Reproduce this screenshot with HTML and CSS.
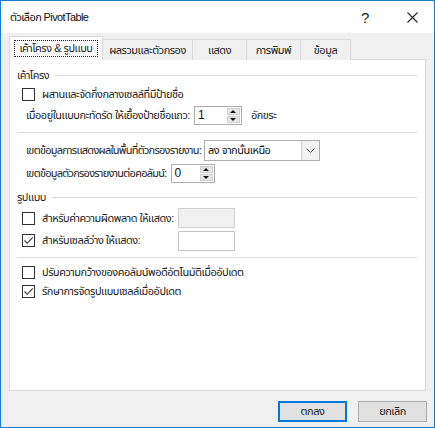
FILE: index.html
```html
<!DOCTYPE html>
<html lang="th">
<head>
<meta charset="utf-8">
<title>ตัวเลือก PivotTable</title>
<link rel="stylesheet" href="styles.css">
</head>
<body>
<div class="dialog">
  <div class="titlebar">
    <span class="title">ตัวเลือก PivotTable</span>
    <span class="help">?</span>
    <span class="close"><svg width="11" height="11" viewBox="0 0 11 11"><path d="M0.5 0.5 L10.5 10.5 M10.5 0.5 L0.5 10.5" stroke="#222" stroke-width="1.1" fill="none"/></svg></span>
  </div>
  <div class="tabs">
    <div class="tab tab-active w1"><span class="focus">เค้าโครง &amp; รูปแบบ</span></div>
    <div class="tab w2">ผลรวมและตัวกรอง</div>
    <div class="tab w3">แสดง</div>
    <div class="tab w4">การพิมพ์</div>
    <div class="tab w5">ข้อมูล</div>
  </div>
  <div class="panel">
    <div class="group-head h1"><span>เค้าโครง</span><i class="rule"></i></div>
    <div class="row cb1"><span class="cb"></span><span>ผสานและจัดกึ่งกลางเซลล์ที่มีป้ายชื่อ</span></div>
    <div class="row sub r-indent"><span>เมื่ออยู่ในแบบกะทัดรัด ให้เยื้องป้ายชื่อแถว:</span>
      <span class="spin s1"><span class="val">1</span><span class="arrows"><b class="up"></b><b class="down"></b></span></span>
      <span class="unit">อักขระ</span></div>
    <div class="sep s-a"></div>
    <div class="row sub r-select"><span class="tight">เขตข้อมูลการแสดงผลในพื้นที่ตัวกรองรายงาน:</span>
      <span class="select"><span class="val">ลง จากนั้นเหนือ</span><span class="drop"><svg width="9" height="5" viewBox="0 0 9 5"><path d="M0.5 0.5 L4.5 4.5 L8.5 0.5" stroke="#555" fill="none"/></svg></span></span></div>
    <div class="row sub r-spin2"><span class="tight">เขตข้อมูลตัวกรองรายงานต่อคอลัมน์:</span>
      <span class="spin s2"><span class="val">0</span><span class="arrows"><b class="up"></b><b class="down"></b></span></span></div>
    <div class="group-head h2"><span>รูปแบบ</span><i class="rule"></i></div>
    <div class="row r-err"><span class="cb"></span><span class="lbl">สำหรับค่าความผิดพลาด ให้แสดง:</span><span class="field disabled"></span></div>
    <div class="row r-blank"><span class="cb checked"><svg width="11" height="11" viewBox="0 0 11 11"><path d="M1.5 5.5 L4.2 8.3 L9.8 2.3" stroke="#333" stroke-width="1.1" fill="none"/></svg></span><span class="lbl">สำหรับเซลล์ว่าง ให้แสดง:</span><span class="field"></span></div>
    <div class="sep s-b"></div>
    <div class="row r-auto"><span class="cb"></span><span>ปรับความกว้างของคอลัมน์พอดีอัตโนมัติเมื่ออัปเดต</span></div>
    <div class="row r-keep"><span class="cb checked"><svg width="11" height="11" viewBox="0 0 11 11"><path d="M1.5 5.5 L4.2 8.3 L9.8 2.3" stroke="#333" stroke-width="1.1" fill="none"/></svg></span><span>รักษาการจัดรูปแบบเซลล์เมื่ออัปเดต</span></div>
  </div>
  <div class="footer">
    <button class="btn btn-default">ตกลง</button>
    <button class="btn">ยกเลิก</button>
  </div>
</div>
</body>
</html>
```
FILE: styles.css
```css
* { box-sizing: border-box; }
html, body { margin: 0; padding: 0; background: #f0f0f0; }
body {
  font-family: "Liberation Sans", "Noto Sans Thai", "Noto Sans Thai UI", "Leelawadee UI", Tahoma, "Loma", "Garuda", sans-serif;
  font-size: 11px;
  letter-spacing: -0.5px;
  color: #1a1a1a;
  white-space: nowrap;
}
.dialog {
  width: 435px;
  height: 428px;
  border: 1px solid #1979ca;
  background: #f0f0f0;
  display: flex;
  flex-direction: column;
}
.titlebar {
  height: 32px;
  background: #fff;
  display: flex;
  align-items: center;
  padding-left: 9px;
  flex: none;
}
.title { font-size: 11px; letter-spacing: -0.6px; color: #111; flex: 1; }
.help { font-size: 15px; letter-spacing: 0; color: #222; width: 14px; margin-right: 32px; }
.close { width: 11px; height: 11px; margin-right: 16px; display: flex; }
.tabs {
  display: flex;
  align-items: flex-end;
  height: 25px;
  margin-top: 2px;
  padding-left: 8px;
  margin-bottom: -1px;
  position: relative;
  z-index: 1;
}
.tab {
  height: 21px;
  border: 1px solid #d9d9d9;
  border-bottom: none;
  margin-left: -1px;
  background: #f0f0f0;
  display: flex;
  align-items: center;
  justify-content: center;
  color: #222;
}
.tab-active {
  height: 24px;
  background: #fff;
  margin-left: 0;
  padding-bottom: 1px;
}
.focus { border: 1px dotted #222; padding: 0 4px; line-height: 15px; }
.w1 { width: 94px; }
.w2 { width: 91px; }
.w3 { width: 55px; }
.w4 { width: 55px; }
.w5 { width: 51px; }
.panel {
  margin: 0 8px;
  height: 332px;
  background: #fff;
  border: 1px solid #d9d9d9;
  padding: 0 8px 0 7px;
  display: flex;
  flex-direction: column;
  flex: none;
}
.group-head {
  display: flex;
  align-items: center;
  height: 16px;
  color: #222;
}
.rule { flex: 1; height: 1px; background: #dcdcdc; margin-left: 6px; }
.h1 { margin-top: 7px; }
.h2 { margin-top: 6px; }
.row { display: flex; align-items: center; color: #222; }
.sub { padding-left: 9px; }
.tight { letter-spacing: -0.75px; }
.cb {
  width: 13px; height: 13px;
  border: 1px solid #333;
  background: #fff;
  margin-left: 5px;
  margin-right: 7px;
  display: flex;
  align-items: center;
  justify-content: center;
  flex: none;
}
.cb1 { margin-top: 1px; height: 20px; }
.r-indent { margin-top: 1px; height: 20px; }
.sep { height: 1px; background: #dcdcdc; flex: none; }
.s-a { margin-top: 7px; }
.s-b { margin-top: 6px; }
.r-select { margin-top: 6px; height: 22px; }
.r-spin2 { margin-top: 2px; height: 20px; }
.r-err { margin-top: 2px; height: 22px; }
.r-blank { margin-top: 1px; height: 21px; }
.r-auto { margin-top: 5px; height: 18px; }
.r-keep { margin-top: 1px; height: 18px; }
.spin {
  height: 19px;
  border: 1px solid #adadad;
  background: #fff;
  display: flex;
  align-items: stretch;
  margin-left: 4px;
}
.s1 { width: 48px; }
.s2 { width: 44px; }
.spin .val { flex: 1; padding-left: 3px; display: flex; align-items: center; color: #111; font-size: 12px; letter-spacing: 0; }
.arrows {
  width: 14px;
  display: flex;
  flex-direction: column;
  padding: 1px 1px 1px 0;
  gap: 1px;
}
.arrows b {
  flex: 1;
  background: #e6e6e6;
  border: 1px solid #cfcfcf;
  display: flex;
  align-items: center;
  justify-content: center;
}
.arrows b::after {
  content: "";
  width: 0; height: 0;
  border-left: 3px solid transparent;
  border-right: 3px solid transparent;
}
.arrows .up::after { border-bottom: 3px solid #111; }
.arrows .down::after { border-top: 3px solid #111; }
.unit { margin-left: 9px; }
.select {
  width: 116px;
  height: 21px;
  border: 1px solid #adadad;
  background: #fff;
  display: flex;
  margin-left: 3px;
}
.select .val { flex: 1; padding-left: 3px; display: flex; align-items: center; color: #111; }
.drop {
  width: 18px;
  background: #f2f2f2;
  border-left: 1px solid #d0d0d0;
  display: flex;
  align-items: center;
  justify-content: center;
}
.lbl { width: 136px; flex: none; }
.field {
  width: 57px;
  height: 20px;
  border: 1px solid #c4c4c4;
  background: #fff;
}
.field.disabled { background: #f0f0f0; border-color: #d0d0d0; }
.footer {
  display: flex;
  justify-content: flex-end;
  gap: 11px;
  margin-top: 10px;
  padding-right: 7px;
}
.btn {
  width: 69px;
  height: 21px;
  border: 1px solid #adadad;
  background: #e1e1e1;
  font-family: inherit;
  font-size: 11px;
  letter-spacing: -0.5px;
  color: #222;
  padding: 0;
}
.btn-default { border: 1px solid #0078d7; box-shadow: inset 0 0 0 1px #0078d7; }
```
